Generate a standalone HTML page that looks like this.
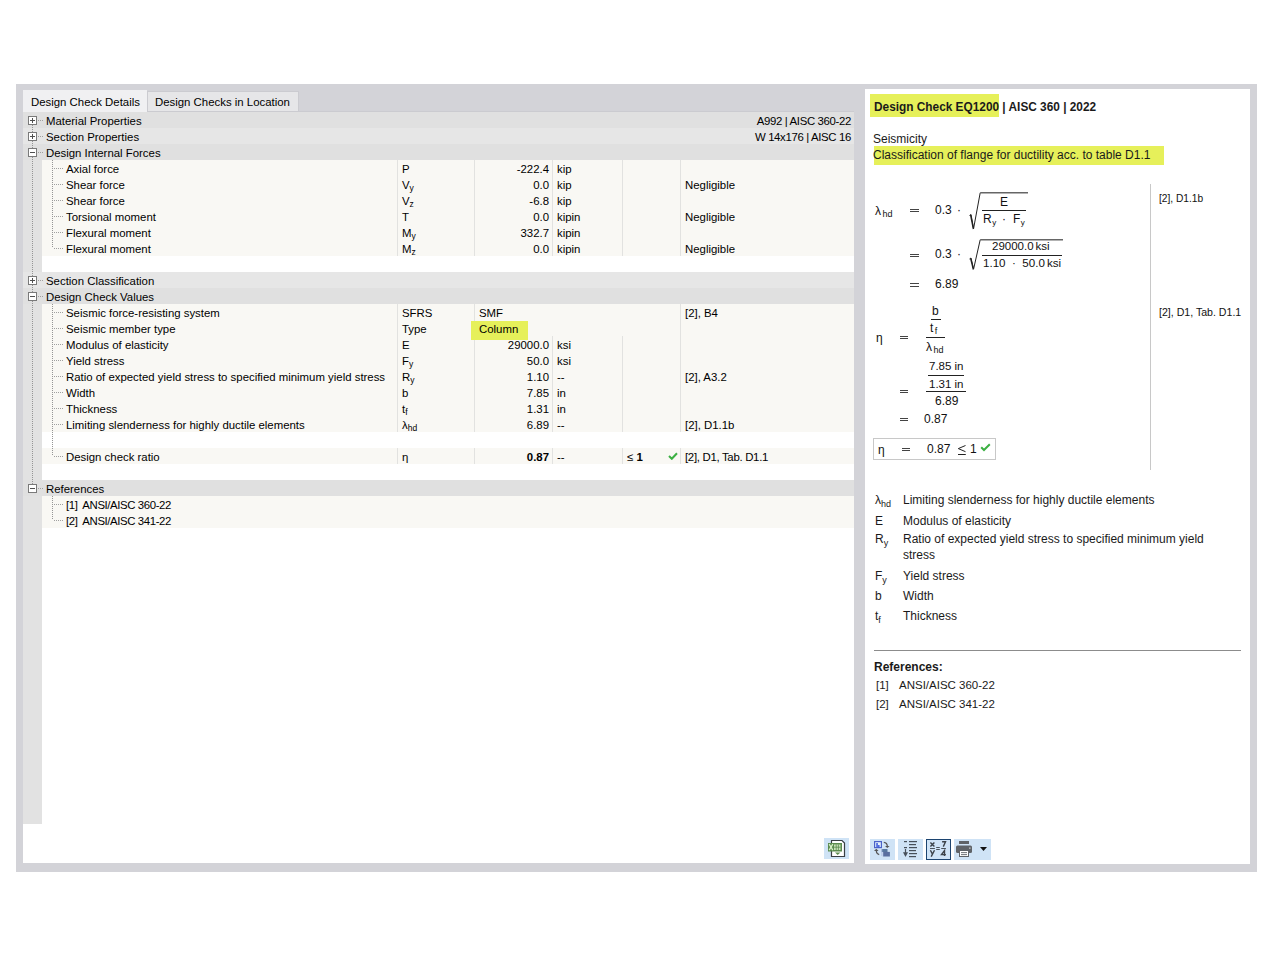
<!DOCTYPE html>
<html><head><meta charset="utf-8">
<style>
*{margin:0;padding:0;box-sizing:border-box}
html,body{width:1280px;height:960px;background:#fff;overflow:hidden;position:relative;font-family:"Liberation Sans",sans-serif;color:#000}
div,svg{position:absolute}
.frame{left:16px;top:84px;width:1241px;height:788px;background:#d3d3d8}
.lp{left:23px;top:90px;width:831px;height:773px;background:#fff}
.rp{left:865px;top:89px;width:385px;height:775px;background:#fff}
.tabstrip{left:23px;top:90px;width:831px;height:22px;background:#d3d3d8}
.tab1{left:23px;top:90px;width:124px;height:22px;background:#f0f0f2}
.tab2{left:147px;top:91px;width:152px;height:21px;background:#e6e6e8;border:1px solid #cbcbd0}
.tabline{left:147px;top:111px;width:707px;height:1px;background:#cbcbd0}
.margin{left:23px;top:112px;width:19px;height:712px;background:#e2e2e2}
.hrc{left:23px;width:831px;height:16px;background:#e6e6e6}
.hro{left:23px;width:831px;height:16px;background:#e0e0e0}
.rc{left:42px;width:812px;height:16px;background:#f9f8f4}
.rb{left:42px;width:812px;height:16px;background:#fff}
.sep{width:1px;background:#e2e2e0}
.hl{background:#e6f05a}
.t{font-size:11.4px;line-height:16px;height:16px;white-space:nowrap;padding-top:1px}
.t sub{font-size:8.5px;vertical-align:-2px;line-height:0}
.vd{width:1px;background:repeating-linear-gradient(to bottom,#959595 0 1px,transparent 1px 2px)}
.hd{height:1px;background:repeating-linear-gradient(to right,#a0a0a0 0 1px,transparent 1px 2px)}
.box{left:28px;width:9px;height:9px;border:1px solid #7a7a7a;background:#fff}
.box::before{content:"";position:absolute;left:1px;top:3px;width:5px;height:1px;background:#505050}
.box.p::after{content:"";position:absolute;left:3px;top:1px;width:1px;height:5px;background:#505050}
.ck{position:absolute}
.btn{background:#cfe3f6}
/* right panel */
.r{font-size:12px;line-height:16px;white-space:nowrap;color:#1a1a1a}
.m{font-size:12px;line-height:14px;white-space:nowrap;color:#111}
.bar{height:1px;background:#222}
.eq{height:3px;border-top:1px solid #444;border-bottom:1px solid #444}
.vsep{width:1px;background:#c8c8c8}
.sb{font-size:9px;vertical-align:-2px;line-height:0;margin-left:1.5px}
.sb2{font-size:9px;vertical-align:-3px;line-height:0;margin-left:0px}
</style></head><body>
<div class="frame"></div>
<div class="lp"></div>
<div class="rp"></div>
<div class="tabstrip"></div>
<div class="tab1"></div>
<div class="tabline"></div>
<div class="tab2"></div>
<div class="t" style="left:31px;top:93px">Design Check Details</div>
<div class="t" style="left:155px;top:93px">Design Checks in Location</div>
<div class="margin"></div>
<div class="hro" style="top:112px"></div>
<div class="hrc" style="top:128px"></div>
<div class="hro" style="top:144px"></div>
<div class="rc" style="top:160px"></div>
<div class="rc" style="top:176px"></div>
<div class="rc" style="top:192px"></div>
<div class="rc" style="top:208px"></div>
<div class="rc" style="top:224px"></div>
<div class="rc" style="top:240px"></div>
<div class="rb" style="top:256px"></div>
<div class="hrc" style="top:272px"></div>
<div class="hro" style="top:288px"></div>
<div class="rc" style="top:304px"></div>
<div class="rc" style="top:320px"></div>
<div class="rc" style="top:336px"></div>
<div class="rc" style="top:352px"></div>
<div class="rc" style="top:368px"></div>
<div class="rc" style="top:384px"></div>
<div class="rc" style="top:400px"></div>
<div class="rc" style="top:416px"></div>
<div class="rb" style="top:432px"></div>
<div class="rc" style="top:448px"></div>
<div class="rb" style="top:464px"></div>
<div class="hro" style="top:480px"></div>
<div class="rc" style="top:496px"></div>
<div class="rc" style="top:512px"></div>
<div class="sep" style="left:397px;top:160px;height:96px"></div>
<div class="sep" style="left:474px;top:160px;height:96px"></div>
<div class="sep" style="left:552px;top:160px;height:96px"></div>
<div class="sep" style="left:622px;top:160px;height:96px"></div>
<div class="sep" style="left:680px;top:160px;height:96px"></div>
<div class="sep" style="left:397px;top:304px;height:128px"></div>
<div class="sep" style="left:474px;top:304px;height:128px"></div>
<div class="sep" style="left:680px;top:304px;height:128px"></div>
<div class="sep" style="left:552px;top:336px;height:96px"></div>
<div class="sep" style="left:622px;top:336px;height:96px"></div>
<div class="sep" style="left:397px;top:448px;height:16px"></div>
<div class="sep" style="left:474px;top:448px;height:16px"></div>
<div class="sep" style="left:552px;top:448px;height:16px"></div>
<div class="sep" style="left:622px;top:448px;height:16px"></div>
<div class="sep" style="left:680px;top:448px;height:16px"></div>
<div class="hl" style="left:471px;top:321px;width:57px;height:19px"></div>
<div class="vd" style="left:32px;top:125px;height:359px"></div>
<div class="box p" style="top:116px"></div>
<div class="hd" style="left:38px;top:120px;width:6px"></div>
<div class="box p" style="top:132px"></div>
<div class="hd" style="left:38px;top:136px;width:6px"></div>
<div class="box" style="top:148px"></div>
<div class="hd" style="left:38px;top:152px;width:6px"></div>
<div class="box p" style="top:276px"></div>
<div class="hd" style="left:38px;top:280px;width:6px"></div>
<div class="box" style="top:292px"></div>
<div class="hd" style="left:38px;top:296px;width:6px"></div>
<div class="box" style="top:484px"></div>
<div class="hd" style="left:38px;top:488px;width:6px"></div>
<div class="vd" style="left:52px;top:160px;height:88px"></div>
<div class="vd" style="left:52px;top:304px;height:152px"></div>
<div class="vd" style="left:52px;top:496px;height:24px"></div>
<div class="hd" style="left:54px;top:168px;width:9px"></div>
<div class="hd" style="left:54px;top:184px;width:9px"></div>
<div class="hd" style="left:54px;top:200px;width:9px"></div>
<div class="hd" style="left:54px;top:216px;width:9px"></div>
<div class="hd" style="left:54px;top:232px;width:9px"></div>
<div class="hd" style="left:54px;top:248px;width:9px"></div>
<div class="hd" style="left:54px;top:312px;width:9px"></div>
<div class="hd" style="left:54px;top:328px;width:9px"></div>
<div class="hd" style="left:54px;top:344px;width:9px"></div>
<div class="hd" style="left:54px;top:360px;width:9px"></div>
<div class="hd" style="left:54px;top:376px;width:9px"></div>
<div class="hd" style="left:54px;top:392px;width:9px"></div>
<div class="hd" style="left:54px;top:408px;width:9px"></div>
<div class="hd" style="left:54px;top:424px;width:9px"></div>
<div class="hd" style="left:54px;top:456px;width:9px"></div>
<div class="hd" style="left:54px;top:504px;width:9px"></div>
<div class="hd" style="left:54px;top:520px;width:9px"></div>
<div class="t" style="left:46px;top:112px;">Material Properties</div>
<div class="t" style="right:429px;top:112px;text-align:right;letter-spacing:-0.35px">A992 | AISC 360-22</div>
<div class="t" style="left:46px;top:128px;">Section Properties</div>
<div class="t" style="right:429px;top:128px;text-align:right;letter-spacing:-0.35px">W 14x176 | AISC 16</div>
<div class="t" style="left:46px;top:144px;">Design Internal Forces</div>
<div class="t" style="left:66px;top:160px;">Axial force</div>
<div class="t" style="left:402px;top:160px;">P</div>
<div class="t" style="right:731px;top:160px">-222.4</div>
<div class="t" style="left:557px;top:160px;">kip</div>
<div class="t" style="left:66px;top:176px;">Shear force</div>
<div class="t" style="left:402px;top:176px;">V<sub>y</sub></div>
<div class="t" style="right:731px;top:176px">0.0</div>
<div class="t" style="left:557px;top:176px;">kip</div>
<div class="t" style="left:685px;top:176px;">Negligible</div>
<div class="t" style="left:66px;top:192px;">Shear force</div>
<div class="t" style="left:402px;top:192px;">V<sub>z</sub></div>
<div class="t" style="right:731px;top:192px">-6.8</div>
<div class="t" style="left:557px;top:192px;">kip</div>
<div class="t" style="left:66px;top:208px;">Torsional moment</div>
<div class="t" style="left:402px;top:208px;">T</div>
<div class="t" style="right:731px;top:208px">0.0</div>
<div class="t" style="left:557px;top:208px;">kipin</div>
<div class="t" style="left:685px;top:208px;">Negligible</div>
<div class="t" style="left:66px;top:224px;">Flexural moment</div>
<div class="t" style="left:402px;top:224px;">M<sub>y</sub></div>
<div class="t" style="right:731px;top:224px">332.7</div>
<div class="t" style="left:557px;top:224px;">kipin</div>
<div class="t" style="left:66px;top:240px;">Flexural moment</div>
<div class="t" style="left:402px;top:240px;">M<sub>z</sub></div>
<div class="t" style="right:731px;top:240px">0.0</div>
<div class="t" style="left:557px;top:240px;">kipin</div>
<div class="t" style="left:685px;top:240px;">Negligible</div>
<div class="t" style="left:46px;top:272px;">Section Classification</div>
<div class="t" style="left:46px;top:288px;">Design Check Values</div>
<div class="t" style="left:66px;top:304px;">Seismic force-resisting system</div>
<div class="t" style="left:402px;top:304px;">SFRS</div>
<div class="t" style="left:479px;top:304px;">SMF</div>
<div class="t" style="left:685px;top:304px;">[2], B4</div>
<div class="t" style="left:66px;top:320px;">Seismic member type</div>
<div class="t" style="left:402px;top:320px;">Type</div>
<div class="t" style="left:479px;top:320px;">Column</div>
<div class="t" style="left:66px;top:336px;">Modulus of elasticity</div>
<div class="t" style="left:402px;top:336px;">E</div>
<div class="t" style="right:731px;top:336px">29000.0</div>
<div class="t" style="left:557px;top:336px;">ksi</div>
<div class="t" style="left:66px;top:352px;">Yield stress</div>
<div class="t" style="left:402px;top:352px;">F<sub>y</sub></div>
<div class="t" style="right:731px;top:352px">50.0</div>
<div class="t" style="left:557px;top:352px;">ksi</div>
<div class="t" style="left:66px;top:368px;">Ratio of expected yield stress to specified minimum yield stress</div>
<div class="t" style="left:402px;top:368px;">R<sub>y</sub></div>
<div class="t" style="right:731px;top:368px">1.10</div>
<div class="t" style="left:557px;top:368px;">--</div>
<div class="t" style="left:685px;top:368px;">[2], A3.2</div>
<div class="t" style="left:66px;top:384px;">Width</div>
<div class="t" style="left:402px;top:384px;">b</div>
<div class="t" style="right:731px;top:384px">7.85</div>
<div class="t" style="left:557px;top:384px;">in</div>
<div class="t" style="left:66px;top:400px;">Thickness</div>
<div class="t" style="left:402px;top:400px;">t<sub>f</sub></div>
<div class="t" style="right:731px;top:400px">1.31</div>
<div class="t" style="left:557px;top:400px;">in</div>
<div class="t" style="left:66px;top:416px;">Limiting slenderness for highly ductile elements</div>
<div class="t" style="left:402px;top:416px;">&lambda;<sub>hd</sub></div>
<div class="t" style="right:731px;top:416px">6.89</div>
<div class="t" style="left:557px;top:416px;">--</div>
<div class="t" style="left:685px;top:416px;">[2], D1.1b</div>
<div class="t" style="left:66px;top:448px;">Design check ratio</div>
<div class="t" style="left:402px;top:448px;">&eta;</div>
<div class="t" style="right:731px;top:448px;font-weight:bold">0.87</div>
<div class="t" style="left:557px;top:448px;">--</div>
<div class="t" style="left:627px;top:448px;">&le; <b>1</b></div>
<svg class="ck" style="left:668px;top:452px" width="10" height="8" viewBox="0 0 10 8"><path d="M1 4 L3.8 6.8 L9 1.2" stroke="#3cb043" stroke-width="2" fill="none"/></svg>
<div class="t" style="left:685px;top:448px;letter-spacing:-0.3px">[2], D1, Tab. D1.1</div>
<div class="t" style="left:46px;top:480px;">References</div>
<div class="t" style="left:66px;top:496px;letter-spacing:-0.4px">[1]&nbsp; ANSI/AISC 360-22</div>
<div class="t" style="left:66px;top:512px;letter-spacing:-0.4px">[2]&nbsp; ANSI/AISC 341-22</div>
<div class="btn" style="left:824px;top:838px;width:25px;height:21px"></div>

<!-- right panel -->
<div class="hl" style="left:870px;top:94px;width:129px;height:23px"></div>
<div class="r" style="left:874px;top:99px;font-weight:bold;font-size:11.85px">Design Check EQ1200 | AISC 360 | 2022</div>
<div class="r" style="left:873px;top:131px">Seismicity</div>
<div class="hl" style="left:874px;top:146px;width:290px;height:19px"></div>
<div class="r" style="left:873px;top:147px">Classification of flange for ductility acc. to table D1.1</div>
<div class="vsep" style="left:1150px;top:184px;height:286px"></div>
<div class="m" style="left:1159px;top:192px;font-size:10.2px">[2], D1.1b</div>
<div class="m" style="left:1159px;top:305px;font-size:10.6px">[2], D1, Tab. D1.1</div>
<!-- lambda formula -->
<div class="m" style="left:875px;top:204px">&lambda;<span class="sb">hd</span></div>
<div class="eq" style="left:910px;top:209px;width:9px"></div>
<div class="m" style="left:935px;top:203px">0.3</div>
<div class="m" style="left:957px;top:203px">&middot;</div>
<svg style="left:966px;top:190px" width="70" height="44" viewBox="0 0 70 44"><path d="M3.5 25.5 L5 24.5 L7.6 38.5 L14.2 2.8" stroke="#222" stroke-width="1" fill="none"/><path d="M14.2 2.8 H62" stroke="#666" stroke-width="1.4" fill="none"/><path d="M4.6 24.8 L7.4 39" stroke="#222" stroke-width="1.4" fill="none"/></svg>
<div class="m" style="left:1000px;top:195px">E</div>
<div class="bar" style="left:982px;top:210px;width:44px"></div>
<div class="m" style="left:983px;top:212px">R<span class="sb" style="font-size:8px;margin-left:0.5px">y</span></div>
<div class="m" style="left:1002px;top:212px">&middot;</div>
<div class="m" style="left:1013px;top:212px">F<span class="sb" style="font-size:8px;margin-left:0.5px">y</span></div>
<div class="eq" style="left:910px;top:254px;width:9px"></div>
<div class="m" style="left:935px;top:247px">0.3</div>
<div class="m" style="left:957px;top:247px">&middot;</div>
<svg style="left:966px;top:237px" width="100" height="36" viewBox="0 0 100 36"><path d="M3.5 22 L5 21 L7.6 32 L14.2 2.8" stroke="#222" stroke-width="1" fill="none"/><path d="M14.2 2.8 H97" stroke="#666" stroke-width="1.4" fill="none"/><path d="M4.6 21.3 L7.4 32.5" stroke="#222" stroke-width="1.4" fill="none"/></svg>
<div class="m" style="left:992px;top:239px;font-size:11.5px">29000.0<span style="margin-left:2px">ksi</span></div>
<div class="bar" style="left:982px;top:255px;width:80px"></div>
<div class="m" style="left:983px;top:256px;font-size:11.6px">1.10 &nbsp;&middot;&nbsp; 50.0<span style="margin-left:2px">ksi</span></div>
<div class="eq" style="left:910px;top:283px;width:9px;height:4px"></div>
<div class="m" style="left:935px;top:277px">6.89</div>
<!-- eta formula -->
<div class="m" style="left:876px;top:331px">&eta;</div>
<div class="eq" style="left:900px;top:336px;width:8px"></div>
<div class="m" style="left:932px;top:304px">b</div>
<div class="bar" style="left:931px;top:319px;width:10px"></div>
<div class="m" style="left:930px;top:321px">t<span class="sb">f</span></div>
<div class="bar" style="left:926px;top:337px;width:19px"></div>
<div class="m" style="left:926px;top:340px">&lambda;<span class="sb">hd</span></div>
<div class="eq" style="left:900px;top:390px;width:8px"></div>
<div class="m" style="left:929px;top:359px;font-size:11.5px">7.85<span style="margin-left:3px">in</span></div>
<div class="bar" style="left:928px;top:375px;width:36px"></div>
<div class="m" style="left:929px;top:377px;font-size:11.5px">1.31<span style="margin-left:3px">in</span></div>
<div class="bar" style="left:926px;top:391px;width:40px"></div>
<div class="m" style="left:935px;top:394px">6.89</div>
<div class="eq" style="left:900px;top:418px;width:8px"></div>
<div class="m" style="left:924px;top:412px">0.87</div>
<!-- result box -->
<div style="left:873px;top:438px;width:123px;height:22px;border:1px solid #c8c8c8"></div>
<div class="m" style="left:878px;top:443px">&eta;</div>
<div class="eq" style="left:902px;top:448px;width:8px"></div>
<div class="m" style="left:927px;top:442px">0.87</div>
<svg style="left:956px;top:443px" width="12" height="14" viewBox="0 0 12 14"><path d="M9.5 2.5 L2.3 5.6 L9.5 8.7" stroke="#222" stroke-width="1" fill="none"/><path d="M2 11.5 H9.8" stroke="#222" stroke-width="1"/></svg>
<div class="m" style="left:970px;top:442px">1</div>
<svg style="left:980px;top:443px" width="11" height="9" viewBox="0 0 11 9"><path d="M1.2 4.2 L4 7 L9.8 1.2" stroke="#3cb043" stroke-width="2" fill="none"/></svg>
<!-- legend -->
<div class="r" style="left:875px;top:492px">&lambda;<span class="sb2">hd</span></div>
<div class="r" style="left:903px;top:492px">Limiting slenderness for highly ductile elements</div>
<div class="r" style="left:875px;top:513px">E</div>
<div class="r" style="left:903px;top:513px">Modulus of elasticity</div>
<div class="r" style="left:875px;top:531px">R<span class="sb2">y</span></div>
<div class="r" style="left:903px;top:531px">Ratio of expected yield stress to specified minimum yield</div>
<div class="r" style="left:903px;top:547px">stress</div>
<div class="r" style="left:875px;top:568px">F<span class="sb2">y</span></div>
<div class="r" style="left:903px;top:568px">Yield stress</div>
<div class="r" style="left:875px;top:588px">b</div>
<div class="r" style="left:903px;top:588px">Width</div>
<div class="r" style="left:875px;top:608px">t<span class="sb2">f</span></div>
<div class="r" style="left:903px;top:608px">Thickness</div>
<div style="left:874px;top:650px;width:367px;height:1px;background:#8c8c8c"></div>
<div class="r" style="left:874px;top:659px;font-weight:bold">References:</div>
<div class="r" style="left:876px;top:677px;font-size:11.5px">[1]</div>
<div class="r" style="left:899px;top:677px;font-size:11.5px">ANSI/AISC 360-22</div>
<div class="r" style="left:876px;top:696px;font-size:11.5px">[2]</div>
<div class="r" style="left:899px;top:696px;font-size:11.5px">ANSI/AISC 341-22</div>
<!-- toolbar right -->
<div class="btn" style="left:870px;top:839px;width:25px;height:21px"></div>
<div class="btn" style="left:898px;top:839px;width:25px;height:21px"></div>
<div class="btn" style="left:926px;top:839px;width:25px;height:21px;border:1px solid #1c4470"></div>
<div class="btn" style="left:954px;top:839px;width:37px;height:21px"></div>

<svg style="left:824px;top:838px" width="25" height="21" viewBox="0 0 25 21">
<path d="M7.5 2.5 H18 L20.5 5 V18.5 H7.5 Z" fill="#fff" stroke="#3a3f44" stroke-width="1.2"/>
<rect x="4" y="5" width="14" height="8.5" fill="#5b8c4f"/>
<path d="M5.2 6.2 L8.8 12.2 M8.8 6.2 L5.2 12.2" stroke="#d8f0c8" stroke-width="1.3"/>
<rect x="10" y="6.5" width="6.5" height="5.5" fill="#c9e2b8"/>
<path d="M12.2 6.5 V12 M14.4 6.5 V12 M10 9.2 H16.5" stroke="#5b8c4f" stroke-width="0.8"/>
<path d="M11 14.6 H16.4 L13.7 17 Z" fill="#5b8c4f"/>
</svg>
<svg style="left:870px;top:839px" width="25" height="21" viewBox="0 0 25 21">
<rect x="4.6" y="2.6" width="6.8" height="6" fill="#e4f2fc" stroke="#4a62c8" stroke-width="1.2"/>
<rect x="6.2" y="4" width="1.7" height="4" fill="#4c6ae0"/><rect x="7.9" y="6" width="1.7" height="2" fill="#4c6ae0"/>
<path d="M13.8 3.3 Q17.3 3.8 17.3 7" stroke="#555" stroke-width="1.2" fill="none"/><path d="M15 7 L19.6 7 L17.3 9 Z" fill="#555"/>
<path d="M6.3 11.8 Q6.5 15 9.2 15.6" stroke="#555" stroke-width="1.2" fill="none"/><path d="M4 12 L8.6 12 L6.3 9.8 Z" fill="#555"/>
<rect x="11.2" y="10" width="6.3" height="3.1" fill="#5878a0"/>
<rect x="13.1" y="12.9" width="6.8" height="4.6" fill="#5a6fa0"/>
<rect x="11.2" y="10" width="1" height="7" fill="#b8c8e8"/><rect x="12.2" y="13" width="0.9" height="4.5" fill="#c0d0ec"/>
</svg>
<svg style="left:898px;top:839px" width="25" height="21" viewBox="0 0 25 21">
<g fill="#47505a">
<rect x="6" y="2" width="3" height="1.2"/><rect x="6" y="8" width="3" height="1.2"/>
<rect x="11" y="2" width="8" height="1.2"/><rect x="11" y="5" width="7" height="1.2"/><rect x="11" y="8" width="8" height="1.2"/>
<rect x="11" y="11" width="7" height="1.2"/><rect x="11" y="14" width="8" height="1.2"/><rect x="11" y="17" width="7" height="1.2"/>
<rect x="6.9" y="10" width="1.2" height="4"/><path d="M5 13.2 H10 L7.5 18 Z"/>
</g></svg>
<svg style="left:926px;top:839px" width="25" height="21" viewBox="0 0 25 21">
<g stroke="#3d434a" stroke-width="1.4" fill="none">
<path d="M4.4 3.4 L8.4 7.5 M8.4 3.4 L4.4 7.5"/>
<path d="M4.4 11.2 L6.6 15.4 M8.5 11.2 L5.2 17.6"/>
<path d="M16.1 2.7 H19.5 L17.3 7.6"/>
<path d="M18.5 17 V11.6 L15.5 15.6 H19.9"/>
</g>
<g fill="#3d434a"><rect x="4" y="9" width="4.9" height="0.9"/><rect x="10.2" y="8.1" width="3.6" height="0.9"/><rect x="10.2" y="10.1" width="3.6" height="0.9"/><rect x="15.2" y="9" width="4.7" height="0.9"/></g>
</svg>
<svg style="left:954px;top:839px" width="37" height="21" viewBox="0 0 37 21">
<rect x="5" y="2" width="10" height="3" fill="#5f6368"/>
<rect x="2" y="6.5" width="16" height="7.5" rx="1.5" fill="#5f6368"/>
<rect x="15" y="8.6" width="1.6" height="1" fill="#ddd"/>
<rect x="5.5" y="11.5" width="9" height="6" fill="#fff" stroke="#5f6368" stroke-width="1"/>
<rect x="7" y="13.2" width="6" height="0.9" fill="#5f6368"/><rect x="7" y="15.2" width="6" height="0.9" fill="#5f6368"/>
<path d="M26 8 H33 L29.5 12 Z" fill="#111"/>
</svg>
</body></html>
